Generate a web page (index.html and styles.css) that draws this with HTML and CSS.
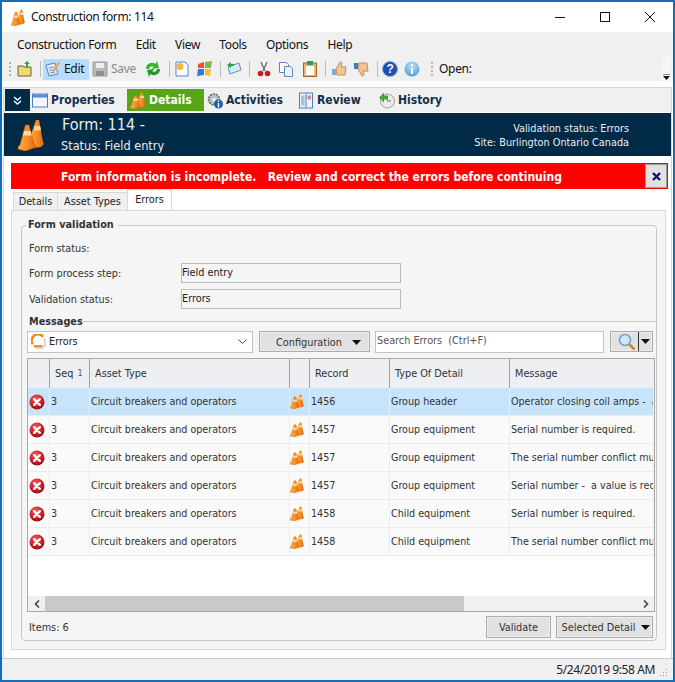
FILE: index.html
```html
<!DOCTYPE html>
<html lang="en">
<head>
<meta charset="utf-8">
<title>Construction form: 114</title>
<link rel="stylesheet" href="styles.css">
</head>
<body>
<svg class="defs" width="0" height="0" aria-hidden="true">
  <defs>
    <linearGradient id="coneGrad" x1="0" x2="1" y1="0" y2="0">
      <stop offset="0" stop-color="#ffb04a"/><stop offset=".55" stop-color="#f78b20"/><stop offset="1" stop-color="#dd660c"/>
    </linearGradient>
    <radialGradient id="errGrad" cx=".4" cy=".3" r=".8">
      <stop offset="0" stop-color="#f0575c"/><stop offset=".7" stop-color="#c3131c"/><stop offset="1" stop-color="#860a10"/>
    </radialGradient>
    <radialGradient id="infoGrad" cx=".5" cy=".3" r=".8">
      <stop offset="0" stop-color="#bfe3fb"/><stop offset="1" stop-color="#3f93dc"/>
    </radialGradient>
    <symbol id="cones" viewBox="0 0 26 32" preserveAspectRatio="none">
      <path d="M18 1h3l4 22 1 2-3 3-8 1-4-8z" fill="url(#coneGrad)"/>
      <path d="M17 7l5.200 0 .8 4.500-7 0z" fill="#ffe2b8" opacity=".85"/>
      <path d="M7.500 6h3.500l5 19 2 2-2 2-9 3-7-2v-2l2-2z" fill="url(#coneGrad)" stroke="#c95c08" stroke-width=".6"/>
      <path d="M6 12l6.600 0 1.100 4.500-8.900 0z" fill="#ffe6c2" opacity=".85"/>
    </symbol>
    <symbol id="err" viewBox="0 0 16 16">
      <circle cx="8" cy="8" r="7.500" fill="url(#errGrad)"/>
      <path d="M5.200 5.200l5.600 5.600M10.800 5.200l-5.600 5.600" stroke="#fff" stroke-width="2.400" stroke-linecap="round"/>
    </symbol>
    <symbol id="caret" viewBox="0 0 9 5"><path d="M0 0h9L4.500 5z" fill="#111"/></symbol>
  </defs>
</svg>

<div class="window">
  <header class="titlebar">
    <svg class="title-icon"><use href="#cones"/></svg>
    <span class="title-text">Construction form: 114</span>
    <div class="winbtns">
      <svg class="winbtn" viewBox="0 0 10 10"><path d="M0 5.500h10" stroke="#111"/></svg>
      <svg class="winbtn" viewBox="0 0 10 10"><rect x=".5" y=".5" width="9" height="9" fill="none" stroke="#111"/></svg>
      <svg class="winbtn" viewBox="0 0 10 10"><path d="M0 0l10 10M10 0L0 10" stroke="#111"/></svg>
    </div>
  </header>

  <nav class="menubar">
    <span>Construction Form</span><span>Edit</span><span>View</span><span>Tools</span><span>Options</span><span>Help</span>
  </nav>

  <div class="toolbar">
    <i class="grip"></i>
    <svg class="tb tb-open" viewBox="0 0 16 16"><path d="M1 5h5l1 1h7v9H1z" fill="#f2d777" stroke="#6f6232"/><path d="M9 7V3H7l3-3 3 3h-2v4z" fill="#39a13a"/></svg>
    <i class="sep sep-0"></i>
    <span class="tb-active">
      <svg class="tb16" viewBox="0 0 16 16"><path d="M2 4l9-2 3 11-9 2z" fill="#dce9fa" stroke="#5e86c4"/><path d="M5 7l5-1M5.500 9.500l5-1M6 12l5-1" stroke="#6f93cc"/><path d="M9 9l5-8 2 1-5 8-3 1z" fill="#f2a33c"/></svg>
      Edit
    </span>
    <svg class="tb tb-save" viewBox="0 0 16 16"><path d="M1 1h14v14H1z" fill="#b9b9b9" stroke="#9a9a9a"/><path d="M4 2h8v5H4z" fill="#eee"/><path d="M4 10h8v5H4z" fill="#8f8f8f"/></svg>
    <span class="tb-save-label">Save</span>
    <svg class="tb tb-refresh" viewBox="0 0 16 16"><path d="M1 8a6 6 0 0 1 9.500-5L12 0l2 7-7 1 1.500-2.500A3.200 3.200 0 0 0 4 8z" fill="#35b52f"/><path d="M15 8a6 6 0 0 1-9.500 5L4 16l-2-7 7-1-1.500 2.500A3.200 3.200 0 0 0 12 8z" fill="#1e9a28"/></svg>
    <i class="sep sep-a"></i>
    <svg class="tb tb-new" viewBox="0 0 16 16"><path d="M2 1h9l3 3v11H2z" fill="#fff" stroke="#4d83c7"/><circle cx="6" cy="5.500" r="3.500" fill="#f6b73c"/></svg>
    <svg class="tb tb-win" viewBox="0 0 16 16"><path d="M1 3l6-2v6H1z" fill="#e4532b"/><path d="M8 1l7-1-1 7H8z" fill="#7dbb3a"/><path d="M1 8h6v6l-7 1z" fill="#3978d0"/><path d="M8 8h6l-1 7-5-1z" fill="#f3c22e"/></svg>
    <i class="sep sep-b"></i>
    <svg class="tb tb-mail" viewBox="0 0 16 16"><path d="M2 6l11-4 2 7-11 4z" fill="#d7e8f7" stroke="#5e90bf"/><path d="M1 4l4-3v2h3v2H5v2z" fill="#2ea043"/></svg>
    <i class="sep sep-c"></i>
    <svg class="tb tb-cut" viewBox="0 0 16 16"><path d="M5 1l4 9M11 1L7 10" stroke="#777" stroke-width="1.500"/><circle cx="4.500" cy="12.500" r="2.800" fill="#c31d22"/><circle cx="11.500" cy="12.500" r="2.800" fill="#c31d22"/></svg>
    <svg class="tb tb-copy" viewBox="0 0 16 16"><path d="M1.500 1.500h7l2 2v8h-9z" fill="#fff" stroke="#5b86c0"/><path d="M6.500 5.500h6l2 2v8h-8z" fill="#eaf2fc" stroke="#5b86c0"/></svg>
    <svg class="tb tb-paste" viewBox="0 0 16 16"><rect x="1.500" y="2" width="13" height="13.500" fill="#f0b76a" stroke="#a8641c"/><rect x="4" y="5" width="8" height="9" fill="#fff"/><rect x="5" y="0" width="6" height="4" fill="#2f9e55"/></svg>
    <i class="sep sep-d"></i>
    <svg class="tb tb-up" viewBox="0 0 16 16"><path d="M5 8l4-7 2 1-1 4h5l-1 8H6z" fill="#f1c594" stroke="#c28d55"/><rect x="1" y="8" width="4" height="6" fill="#7ea6d6"/></svg>
    <svg class="tb tb-down" viewBox="0 0 16 16"><path d="M5 8l4 7 2-1-1-4h5l-1-8H6z" fill="#f1c594" stroke="#c28d55"/><rect x="1" y="2" width="4" height="6" fill="#3e7cc9"/></svg>
    <i class="sep sep-e"></i>
    <svg class="tb tb-help" viewBox="0 0 16 16"><circle cx="8" cy="8" r="7.500" fill="#1b50b5" stroke="#8aa6d8"/><text x="8" y="12" class="icon-q">?</text></svg>
    <svg class="tb tb-info" viewBox="0 0 16 16"><circle cx="8" cy="8" r="7.500" fill="url(#infoGrad)"/><path d="M7 7h2v6H7zM7 3h2v2H7z" fill="#fff"/></svg>
    <i class="grip grip-b"></i>
    <span class="open-label">Open:</span>
    <span class="overflow"><svg viewBox="0 0 7 6"><path d="M0 0h7" stroke="#111"/><path d="M0 2h7L3.500 6z" fill="#111"/></svg></span>
  </div>

  <div class="main">
    <nav class="navbar">
      <span class="collapse"><svg viewBox="0 0 9 9"><path d="M1 1l3.500 3L8 1M1 5l3.500 3L8 5" fill="none" stroke="#fff" stroke-width="1.400"/></svg></span>
      <span class="navitem nav-props">
        <svg class="nav-icon" viewBox="0 0 16 16"><rect x=".5" y="1.500" width="15" height="13" fill="#f4f8fe" stroke="#4c7ec1"/><rect x="1" y="2" width="14" height="3" fill="#4c8be0"/></svg>Properties
      </span>
      <span class="navitem nav-details"><svg class="nav-icon"><use href="#cones"/></svg>Details</span>
      <span class="navitem nav-act">
        <svg class="nav-icon" viewBox="0 0 16 16"><circle cx="7" cy="7" r="5.500" fill="#b9bec5" stroke="#666" stroke-width="1.500" stroke-dasharray="2 1"/><circle cx="7" cy="7" r="2" fill="#eee"/><circle cx="11.500" cy="11.500" r="4.500" fill="#1d5fa8"/><path d="M10.800 10.500h1.400V15h-1.400zM10.800 8h1.400v1.400h-1.400z" fill="#fff"/></svg>Activities
      </span>
      <span class="navitem nav-rev">
        <svg class="nav-icon" viewBox="0 0 16 16"><rect x="1.500" y=".5" width="13" height="15" fill="#eef3fb" stroke="#4c7ec1"/><path d="M8 1v14" stroke="#4c7ec1"/><rect x="3" y="3" width="3.500" height="10" fill="#a5bfe6"/><rect x="9.500" y="3" width="3.500" height="4" fill="#c98e8e"/></svg>Review
      </span>
      <span class="navitem nav-hist">
        <svg class="nav-icon" viewBox="0 0 16 16"><circle cx="8.500" cy="8.500" r="7" fill="#e9ece8" stroke="#9aa19a"/><path d="M8.500 4v4.500H12" fill="none" stroke="#777"/><path d="M0 5l5-5v3h4v4H5v3z" fill="#3fa63a"/></svg>History
      </span>
    </nav>

    <section class="formhead">
      <svg class="formhead-icon"><use href="#cones"/></svg>
      <div class="formhead-left">
        <div class="form-name">Form: 114 -</div>
        <div class="form-status">Status: Field entry</div>
      </div>
      <div class="formhead-right">
        <div>Validation status: Errors</div>
        <div>Site: Burlington Ontario Canada</div>
      </div>
    </section>

    <div class="banner">
      <span class="banner-text">Form information is incomplete.   Review and correct the errors before continuing</span>
      <span class="banner-close"><svg viewBox="0 0 9 9"><path d="M1 1l7 7M8 1L1 8" stroke="#0a0a78" stroke-width="2.200"/></svg></span>
    </div>

    <div class="tabs">
      <span class="tab tab-a">Details</span><span class="tab tab-b">Asset Types</span><span class="tab tab-active">Errors</span>
    </div>

    <div class="tabpanel">
      <fieldset class="group">
        <legend>Form validation</legend>
        <div class="row row-status"><span class="label">Form status:</span></div>
        <div class="row row-step"><span class="label">Form process step:</span><span class="field">Field entry</span></div>
        <div class="row row-valid"><span class="label">Validation status:</span><span class="field">Errors</span></div>
        <div class="section-title"><b>Messages</b><i></i></div>

        <div class="filters">
          <div class="combo">
            <svg class="combo-icon" viewBox="0 0 16 16"><path d="M2 11A6 6 0 0 1 13 3" fill="none" stroke="#f08a12" stroke-width="2.600"/><path d="M14 5a6 6 0 0 1-10 8" fill="none" stroke="#d9d9d9" stroke-width="2.600"/><path d="M3 13h9" stroke="#f08a12" stroke-width="2.200"/></svg>
            <span>Errors</span>
            <svg class="combo-arrow" viewBox="0 0 9 5"><path d="M.5.500l4 4 4-4" fill="none" stroke="#444"/></svg>
          </div>
          <div class="btn btn-config">Configuration<svg class="caret"><use href="#caret"/></svg></div>
          <div class="search">Search Errors  (Ctrl+F)</div>
          <div class="btn btn-find">
            <svg class="find-icon" viewBox="0 0 18 18"><circle cx="7" cy="7" r="5.500" fill="#cfe6fb" stroke="#6f9fd0" stroke-width="1.500"/><path d="M11 11l5.500 5.500" stroke="#c88a2b" stroke-width="2.600"/></svg>
            <span class="find-drop"><svg class="caret"><use href="#caret"/></svg></span>
          </div>
        </div>

        <div class="grid">
          <div class="grid-row grid-head">
            <div></div><div>Seq <small>1</small></div><div>Asset Type</div><div></div><div>Record</div><div>Type Of Detail</div><div>Message</div>
          </div>
          <div class="grid-row grid-selected">
            <div class="c-icon"><svg class="err"><use href="#err"/></svg></div><div>3</div><div>Circuit breakers and operators</div><div class="c-cone"><svg class="cone"><use href="#cones"/></svg></div><div>1456</div><div>Group header</div><div>Operator closing coil amps -  a</div>
          </div>
          <div class="grid-row">
            <div class="c-icon"><svg class="err"><use href="#err"/></svg></div><div>3</div><div>Circuit breakers and operators</div><div class="c-cone"><svg class="cone"><use href="#cones"/></svg></div><div>1457</div><div>Group equipment</div><div>Serial number is required.</div>
          </div>
          <div class="grid-row">
            <div class="c-icon"><svg class="err"><use href="#err"/></svg></div><div>3</div><div>Circuit breakers and operators</div><div class="c-cone"><svg class="cone"><use href="#cones"/></svg></div><div>1457</div><div>Group equipment</div><div>The serial number conflict mus</div>
          </div>
          <div class="grid-row">
            <div class="c-icon"><svg class="err"><use href="#err"/></svg></div><div>3</div><div>Circuit breakers and operators</div><div class="c-cone"><svg class="cone"><use href="#cones"/></svg></div><div>1457</div><div>Group equipment</div><div>Serial number -  a value is req</div>
          </div>
          <div class="grid-row">
            <div class="c-icon"><svg class="err"><use href="#err"/></svg></div><div>3</div><div>Circuit breakers and operators</div><div class="c-cone"><svg class="cone"><use href="#cones"/></svg></div><div>1458</div><div>Child equipment</div><div>Serial number is required.</div>
          </div>
          <div class="grid-row">
            <div class="c-icon"><svg class="err"><use href="#err"/></svg></div><div>3</div><div>Circuit breakers and operators</div><div class="c-cone"><svg class="cone"><use href="#cones"/></svg></div><div>1458</div><div>Child equipment</div><div>The serial number conflict mus</div>
          </div>
          <div class="grid-space"></div>
          <div class="hscroll">
            <span class="hs-btn"><svg viewBox="0 0 6 8"><path d="M5 .500L1.500 4 5 7.500" fill="none" stroke="#444" stroke-width="1.600"/></svg></span>
            <span class="hs-thumb"></span>
            <span class="hs-track"></span>
            <span class="hs-btn"><svg viewBox="0 0 6 8"><path d="M1 .500L4.500 4 1 7.500" fill="none" stroke="#444" stroke-width="1.600"/></svg></span>
          </div>
        </div>

        <div class="group-foot">
          <span class="items">Items: 6</span>
          <div class="btn btn-validate">Validate</div>
          <div class="btn btn-selected">Selected Detail<svg class="caret"><use href="#caret"/></svg></div>
        </div>
      </fieldset>
    </div>
  </div>

  <footer class="statusbar">
    <span>5/24/2019 9:58 AM</span>
    <svg class="resize" viewBox="0 0 10 10"><path d="M8 1h1v1H8zM5 4h1v1H5zM8 4h1v1H8zM2 7h1v1H2zM5 7h1v1H5zM8 7h1v1H8z" fill="#999"/></svg>
  </footer>
</div>
</body>
</html>
```
FILE: styles.css
```css
* { box-sizing: border-box; }
html, body { margin: 0; padding: 0; background: #fff; }
body { font: 10.8px/13px "DejaVu Sans Condensed", "DejaVu Sans", sans-serif; color: #222; }
.defs { display: block; height: 0; }
svg { display: block; flex: none; }

.window { width: 675px; height: 682px; border: 2px solid #0f6fbe; display: flex; flex-direction: column; background: #fff; overflow: hidden; }

.titlebar { height: 30px; display: flex; align-items: center; padding-left: 9px; }
.title-icon { width: 14px; height: 17px; }
.title-text { margin-left: 6px; font: 12px/16px "Noto Sans", sans-serif; letter-spacing: -.35px; color: #111; }
.winbtns { margin-left: auto; display: flex; gap: 35px; padding-right: 18px; }
.winbtn { width: 10px; height: 10px; }

.menubar { height: 25px; background: #f0f0f0; display: flex; align-items: center; gap: 19.3px; padding-left: 15px; font: 12px/16px "Noto Sans", sans-serif; letter-spacing: -.35px; color: #111; }

.toolbar { height: 25px; background: #f0f0f0; display: flex; align-items: center; font: 12px/16px "Noto Sans", sans-serif; letter-spacing: -.3px; color: #111; border-bottom: 1px solid #fff; }
.tb { width: 16px; height: 16px; }
.tb16 { width: 16px; height: 16px; margin-right: 4px; }
.grip { width: 2px; height: 14px; margin-left: 7px; background: repeating-linear-gradient(#b4b4b4 0 2px, transparent 2px 4px); }
.grip-b { margin-left: 11px; }
.sep { width: 1px; height: 16px; background: #bdbdbd; }
.tb-open { margin-left: 6px; }
.sep-0 { margin-left: 7px; }
.tb-active { display: flex; align-items: center; height: 21px; width: 46px; margin-left: 2px; padding-left: 1px; background: #b8dcfb; }
.tb-save { margin-left: 3px; }
.tb-save-label { margin-left: 3px; color: #8a8a8a; }
.tb-refresh { margin-left: 9px; }
.sep-a { margin-left: 8px; }
.tb-new { margin-left: 4px; }
.tb-win { margin-left: 7px; }
.sep-b { margin-left: 7px; }
.tb-mail { margin-left: 5px; }
.sep-c { margin-left: 7px; }
.tb-cut { margin-left: 6px; }
.tb-copy { margin-left: 6px; }
.tb-paste { margin-left: 8px; }
.sep-d { margin-left: 7px; }
.tb-up { margin-left: 5px; }
.tb-down { margin-left: 6px; }
.sep-e { margin-left: 8px; }
.tb-help { margin-left: 4px; }
.tb-info { margin-left: 6px; }
.icon-q { font: bold 12px "Liberation Sans", sans-serif; fill: #fff; text-anchor: middle; }
.open-label { margin-left: 6px; }
.overflow { margin-left: auto; width: 9px; height: 25px; margin-right: 2px; background: #f6f6f6; display: flex; align-items: flex-end; justify-content: center; padding-bottom: 2px; }
.overflow svg { width: 7px; height: 6px; }

.main { flex: 1; min-height: 0; margin-top: 5px; margin-left: 1px; margin-right: 1px; border-left: 1px solid #cdd9e5; border-right: 1px solid #cdd9e5; border-top: 1px solid #d5d5d5; display: flex; flex-direction: column; }

.navbar { height: 24px; background: #f0f0f0; display: flex; align-items: center; font: bold 12px/16px "DejaVu Sans Condensed", "DejaVu Sans", sans-serif; color: #12304f; }
.collapse { width: 25px; height: 22px; background: #012a47; display: flex; align-items: center; justify-content: center; margin-left: 1px; }
.collapse svg { width: 9px; height: 9px; }
.navitem { display: flex; align-items: center; gap: 3px; height: 22px; }
.nav-icon { width: 16px; height: 17px; }
.nav-props { margin-left: 2px; width: 95px; }
.nav-details { width: 77px; background: #58a618; color: #fff; padding-left: 3px; }
.nav-act { margin-left: 3px; width: 91px; }
.nav-rev { width: 81px; }
.nav-hist { width: 80px; }

.formhead { height: 43px; margin-top: 1px; background: #012a47; color: #e8eef3; display: flex; align-items: center; flex: none; }
.formhead-icon { width: 26px; height: 32px; margin-left: 14px; }
.formhead-left { margin-left: 17px; margin-bottom: 3px; }
.form-name { font-size: 16px; line-height: 18px; margin-bottom: 4px; margin-left: 1px; }
.form-status { font-size: 12.6px; line-height: 15px; margin-bottom: -2px; }
.formhead-right { margin-left: auto; padding-right: 42px; text-align: right; line-height: 14px; padding-top: 2px; }

.banner { height: 26px; margin: 7px 3px 0 7px; flex: none; background: #f00; display: flex; align-items: center; padding-left: 50px; padding-right: 1px; }
.banner-text { white-space: pre; color: #fff; font: bold 12px/16px "DejaVu Sans Condensed", "DejaVu Sans", sans-serif; padding-top: 1px; }
.banner-close { margin-left: auto; width: 22px; height: 24px; background: #e1e1e1; border: 1px solid #9a9a9a; display: flex; align-items: center; justify-content: center; }
.banner-close svg { width: 9px; height: 9px; }

.tabs { height: 21px; flex: none; margin-left: 9px; display: flex; align-items: flex-end; }
.tab { height: 18px; text-align: center; line-height: 18px; background: #f0f0f0; border: 1px solid #d9d9d9; border-bottom: 0; border-right: 0; }
.tab-a { width: 44px; }
.tab-b { width: 70px; }
.tab-active { width: 45px; height: 21px; background: #fff; line-height: 20px; border-right: 1px solid #d9d9d9; }

.tabpanel { height: 440px; flex: none; margin: 0 5px 0 7px; background: #f5f5f5; border: 1px solid #d9d9d9; padding: 0 8px 0 9px; }

.group { margin: 8px 0 0; padding: 0 0 0 5px; height: 422px; border: 1px solid #c6c8cc; border-radius: 4px; min-width: 0; }
.group legend { font-weight: bold; padding: 0 4px 2px 2px; margin-left: -1px; color: #333; line-height: 11px; }

.row { display: flex; align-items: center; padding-left: 2px; }
.row-status { height: 20px; margin-top: 6px; }
.row-step { height: 20px; margin-top: 5px; }
.row-valid { height: 20px; margin-top: 6px; }
.label { width: 152px; color: #333; }
.field { width: 220px; height: 20px; border: 1px solid #bcbcbc; line-height: 17px; }

.section-title { display: flex; align-items: center; padding-left: 2px; margin-top: 6px; height: 12px; }
.section-title b { color: #333; }
.section-title i { flex: 1; height: 1px; background: #c6c8cc; }

.filters { display: flex; align-items: center; height: 23px; margin-top: 3px; padding-right: 1px; }
.combo { width: 226px; height: 22px; background: #fff; border: 1px solid #c4c4c4; display: flex; align-items: center; padding-left: 3px; }
.combo-icon { width: 15px; height: 15px; margin-right: 3px; }
.combo-arrow { width: 9px; height: 5px; margin-left: auto; margin-right: 5px; }
.btn { background: #e1e1e1; border: 1px solid #adadad; display: flex; align-items: center; justify-content: center; box-shadow: inset 0 0 0 1px #ececec; color: #333; }
.btn-config { width: 111px; height: 21px; margin-left: 6px; gap: 10px; padding-left: 8px; padding-top: 1px; }
.caret { width: 9px; height: 5px; }
.search { width: 229px; height: 22px; margin-left: 5px; background: #fff; border: 1px solid #c4c4c4; padding-left: 1px; line-height: 17px; white-space: pre; color: #555; }
.btn-find { width: 43px; height: 21px; margin-left: 6px; justify-content: flex-start; }
.find-icon { width: 18px; height: 18px; margin-left: 7px; }
.find-drop { margin-left: auto; width: 14px; height: 100%; border-left: 1px solid #333; display: flex; align-items: center; justify-content: center; }

.grid { margin-top: 5px; margin-right: 1px; height: 254px; background: #fff; border: 1px solid #a9a9a9; display: flex; flex-direction: column; overflow: hidden; }
.grid-row { display: grid; grid-template-columns: 22px 40px 200px 20px 80px 120px 1fr; height: 28px; flex: none; align-items: center; border-bottom: 1px solid #ececec; background: #fafafa; font-size: 10.65px; }
.grid-row > div { height: 100%; display: flex; align-items: center; padding-left: 1px; white-space: pre; overflow: hidden; border-right: 1px solid #ececec; color: #333; }
.grid-head { height: 29px; background: #eeeff3; border-bottom: 0; font-size: 10.8px; }
.grid-head > div { padding-left: 5px; border-right: 1px solid #a0a0a0; }
.grid-head > div:last-child { border-right: 0; }
.grid-head small { font-size: 9px; margin-left: 1px; color: #555; }
.grid-selected { background: #c8e4fb; }
.grid-selected > div { border-right-color: #e2f0fc; }
.c-icon { padding-left: 1px !important; }
.c-cone { padding-left: 0 !important; }
.err { width: 16px; height: 16px; }
.cone { width: 14px; height: 15px; }
.grid-space { flex: 1; }
.hscroll { height: 15px; flex: none; display: flex; background: #f0f0f0; }
.hs-btn { width: 17px; display: flex; align-items: center; justify-content: center; }
.hs-btn svg { width: 6px; height: 8px; }
.hs-thumb { width: 419px; background: #c9c9c9; }
.hs-track { flex: 1; }

.group-foot { display: flex; align-items: center; height: 22px; margin-top: 4px; padding-left: 2px; padding-right: 3px; }
.items { margin-right: auto; color: #333; }
.btn-validate { width: 65px; height: 22px; }
.btn-selected { width: 97px; height: 22px; margin-left: 5px; gap: 6px; padding-left: 3px; }

.statusbar { height: 22px; margin-top: auto; flex: none; background: #f0f0f0; border-top: 1px solid #c8ced4; display: flex; align-items: center; justify-content: flex-end; font: 12px/16px "Noto Sans", sans-serif; letter-spacing: -.4px; color: #222; padding-right: 5px; }
.resize { width: 10px; height: 10px; margin-left: 3px; margin-top: 6px; }
```
